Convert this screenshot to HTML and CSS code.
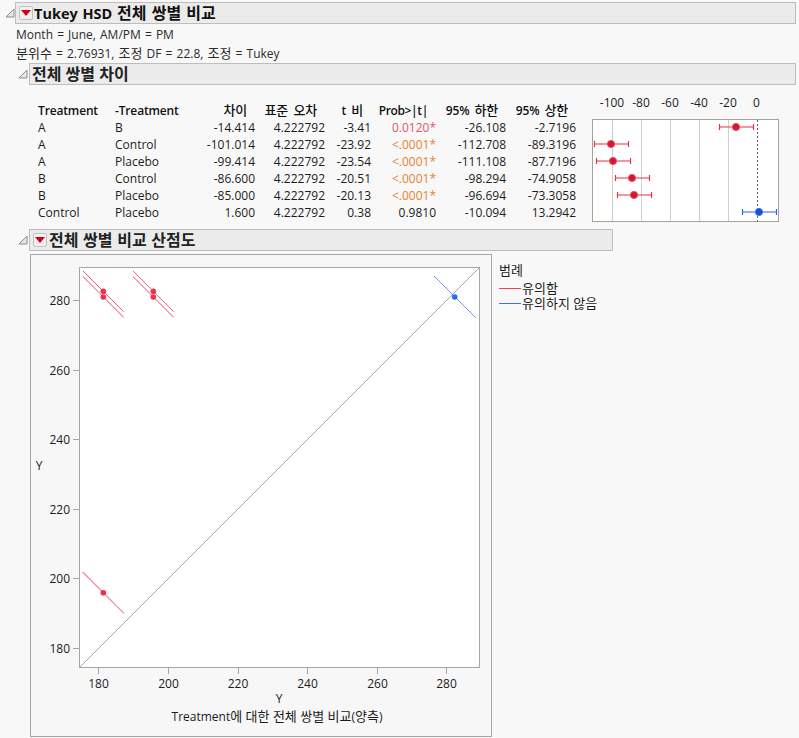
FILE: index.html
```html
<!DOCTYPE html>
<html lang="ko">
<head>
<meta charset="utf-8">
<title>Tukey HSD</title>
<link rel="stylesheet" href="styles.css">
</head>
<body>
<section class="outline top">
  <header class="bar bar-main">
    <svg class="tri" width="10" height="10" viewBox="0 0 10 10"><path d="M9 1V9H1Z" fill="#e6e6e6" stroke="#8c8c8c"/></svg>
    <div class="bar-box box-main">
      <span class="btn"><svg width="10" height="6" viewBox="0 0 10 6"><path d="M0 0H10L5 6Z" fill="#d0021b"/></svg></span>
      <h1>Tukey HSD <span class="ko">전체 쌍별 비교</span></h1>
    </div>
  </header>
  <div class="info">
    <p>Month = June, AM/PM = PM</p>
    <p><span class="ko">분위수</span> = 2.76931, <span class="ko">조정</span> DF = 22.8, <span class="ko">조정</span> = Tukey</p>
  </div>

  <header class="bar bar-sub">
    <svg class="tri" width="10" height="10" viewBox="0 0 10 10"><path d="M9 1V9H1Z" fill="#e6e6e6" stroke="#8c8c8c"/></svg>
    <div class="bar-box box-sub"><h2>전체 쌍별 차이</h2></div>
  </header>

  <div class="report">
    <table class="grid">
      <thead>
        <tr><th class="c1">Treatment</th><th class="c2">-Treatment</th><th class="n1 ko">차이</th><th class="n2 ko">표준 오차</th><th class="n3">t <span class="ko">비</span></th><th class="n4">Prob&gt;|t|</th><th class="n5">95% <span class="ko">하한</span></th><th class="n6">95% <span class="ko">상한</span></th></tr>
      </thead>
      <tbody>
        <tr><td>A</td><td>B</td><td class="num">-14.414</td><td class="num">4.222792</td><td class="num">-3.41</td><td class="num rose">0.0120*</td><td class="num">-26.108</td><td class="num">-2.7196</td></tr>
        <tr><td>A</td><td>Control</td><td class="num">-101.014</td><td class="num">4.222792</td><td class="num">-23.92</td><td class="num amber">&lt;.0001*</td><td class="num">-112.708</td><td class="num">-89.3196</td></tr>
        <tr><td>A</td><td>Placebo</td><td class="num">-99.414</td><td class="num">4.222792</td><td class="num">-23.54</td><td class="num amber">&lt;.0001*</td><td class="num">-111.108</td><td class="num">-87.7196</td></tr>
        <tr><td>B</td><td>Control</td><td class="num">-86.600</td><td class="num">4.222792</td><td class="num">-20.51</td><td class="num amber">&lt;.0001*</td><td class="num">-98.294</td><td class="num">-74.9058</td></tr>
        <tr><td>B</td><td>Placebo</td><td class="num">-85.000</td><td class="num">4.222792</td><td class="num">-20.13</td><td class="num amber">&lt;.0001*</td><td class="num">-96.694</td><td class="num">-73.3058</td></tr>
        <tr><td>Control</td><td>Placebo</td><td class="num">1.600</td><td class="num">4.222792</td><td class="num">0.38</td><td class="num">0.9810</td><td class="num">-10.094</td><td class="num">13.2942</td></tr>
      </tbody>
    </table>
    <svg class="forest" width="207" height="134" viewBox="592 90 207 134">
      <g class="flabel">
        <text x="612" y="107">-100</text><text x="641" y="107">-80</text><text x="670" y="107">-60</text><text x="699" y="107">-40</text><text x="728" y="107">-20</text><text x="756.5" y="107">0</text>
      </g>
      <rect x="592.5" y="119.5" width="186" height="102" fill="#fff" stroke="#a3a396"/>
      <g stroke="#cfcfcf"><path d="M612.5 120V221M641.5 120V221M670.5 120V221M699.5 120V221M728.5 120V221"/></g>
      <path d="M757.5 120V221" stroke="#666" stroke-dasharray="2 2"/>
      <g stroke="#e8304a" fill="none" stroke-width="1.2">
        <path d="M719.5 127H753.5M719.5 124V130M753.5 124V130"/>
        <path d="M594.5 144H628.5M594.5 141V147M628.5 141V147"/>
        <path d="M596.5 161H630.5M596.5 158V164M630.5 158V164"/>
        <path d="M615.5 178H649.5M615.5 175V181M649.5 175V181"/>
        <path d="M617.5 195H651.5M617.5 192V198M651.5 192V198"/>
      </g>
      <path d="M742.5 212H776.5M742.5 209V215M776.5 209V215" stroke="#2a66e8" fill="none" stroke-width="1.2"/>
      <g fill="#cf1a34" stroke="#ee4a5e">
        <circle cx="736" cy="127" r="3.6"/><circle cx="611" cy="144" r="3.6"/><circle cx="613" cy="161" r="3.6"/><circle cx="632" cy="178" r="3.6"/><circle cx="634" cy="195" r="3.6"/>
      </g>
      <circle cx="759" cy="212" r="3.6" fill="#1450d2" stroke="#3a78f0"/>
    </svg>
  </div>

  <header class="bar bar-third">
    <svg class="tri" width="10" height="10" viewBox="0 0 10 10"><path d="M9 1V9H1Z" fill="#e6e6e6" stroke="#8c8c8c"/></svg>
    <div class="bar-box box-third">
      <span class="btn"><svg width="10" height="6" viewBox="0 0 10 6"><path d="M0 0H10L5 6Z" fill="#d0021b"/></svg></span>
      <h2 class="plot-title">전체 쌍별 비교 산점도</h2>
    </div>
  </header>

  <div class="plot-row">
    <div class="frame">
      <svg class="scatter" width="460" height="481" viewBox="31 255 460 481">
        <rect x="79.5" y="267.5" width="400" height="400" fill="#fff" stroke="#a6a6a6"/>
        <g stroke="#a6a6a6" fill="none">
          <path d="M73 300.5H79M73 370.5H79M73 439.5H79M73 509.5H79M73 578.5H79M73 648.5H79"/>
          <path d="M98.5 668V674M168.5 668V674M238.5 668V674M307.5 668V674M377.5 668V674M446.5 668V674"/>
        </g>
        <path class="hair" d="M80 667L479 268" stroke="#a8a8a8"/>
        <g class="hair" stroke="#f4607a">
          <path d="M83 271L123.7 311.7"/>
          <path d="M133 271L173.7 311.7"/>
        </g>
        <g class="thin" stroke="#f58a9a">
          <path d="M83 276.7L123.7 317.3"/>
          <path d="M133 276.7L173.7 317.3"/>
          <path d="M82.7 572L124 613.3"/>
        </g>
        <path class="hair" d="M434 276L475.7 317.7" stroke="#6a98f4"/>
        <g fill="#ee3048">
          <circle cx="103.3" cy="291.3" r="2.8"/><circle cx="103.3" cy="297" r="2.8"/><circle cx="153.3" cy="291.3" r="2.8"/><circle cx="153.3" cy="297" r="2.8"/><circle cx="103.3" cy="592.7" r="2.8"/>
        </g>
        <circle cx="454.7" cy="297" r="2.8" fill="#2a6af0"/>
        <g class="ylabel">
          <text x="70" y="305">280</text><text x="70" y="375">260</text><text x="70" y="444">240</text><text x="70" y="514">220</text><text x="70" y="583">200</text><text x="70" y="653">180</text>
        </g>
        <g class="xlabel">
          <text x="98.5" y="688">180</text><text x="168.5" y="688">200</text><text x="238" y="688">220</text><text x="307.5" y="688">240</text><text x="377.5" y="688">260</text><text x="446.5" y="688">280</text>
        </g>
        <text class="axis" x="39" y="470">Y</text>
        <text class="axis" x="279" y="703">Y</text>
        <text class="axis" x="277" y="721">Treatment<tspan class="ko">에 대한 전체 쌍별 비교</tspan>(<tspan class="ko">양측</tspan>)</text>
      </svg>
    </div>
    <aside class="legend">
      <div class="legend-title ko">범례</div>
      <div class="legend-item ko"><span class="swatch red"></span>유의함</div>
      <div class="legend-item ko"><span class="swatch blue"></span>유의하지 않음</div>
    </aside>
  </div>
</section>
</body>
</html>
```

FILE: styles.css
```css
* { box-sizing: border-box; }
html, body { margin: 0; padding: 0; }
body {
  width: 799px;
  height: 738px;
  overflow: hidden;
  background: #f8f8f8;
  color: #1c1c1c;
  font: 12px/17px "Open Sans", "Noto Sans CJK KR", sans-serif;
}
.outline { padding-top: 2px; }
h1, h2, p { margin: 0; }
.ko { font-size: 13px; }
.bar { display: flex; align-items: center; }
.tri { flex: none; display: block; }
.bar-box {
  display: flex;
  align-items: center;
  height: 22px;
  background: #ebebeb;
  border: 1px solid #bdbdbd;
}
.bar-main { padding-left: 5px; }
.box-main { width: 781px; padding-left: 3px; gap: 1px; }
.bar-sub { margin-top: 2px; padding-left: 18px; }
.box-sub { width: 767px; margin-left: 1px; padding-left: 2px; }
.bar-third { padding-left: 18px; }
.box-third { width: 584px; margin-left: 1px; padding-left: 3px; gap: 2px; }
h1 {
  font-size: 14.5px;
  font-weight: 700;
  color: #111;
  white-space: nowrap;
  word-spacing: 1px;
}
h1 .ko { font-size: 16px; }
h2 {
  font-size: 16px;
  font-weight: 700;
  color: #222;
  white-space: nowrap;
}
.plot-title { word-spacing: 0.5px; }
.btn {
  display: flex;
  align-items: center;
  justify-content: center;
  width: 14px;
  height: 14px;
  background: #f1f1f1;
  border: 1px solid #c2c2c2;
  border-radius: 2px;
}
.info { padding: 2px 0 0 16px; line-height: 18px; height: 37px; color: #2a2a2a; word-spacing: 1px; }
.report { display: flex; padding-top: 17px; height: 144px; }
.grid {
  border-collapse: collapse;
  table-layout: fixed;
  width: 539px;
  margin-left: 38px;
  height: 119px;
}
.grid th, .grid td { padding: 0; height: 17px; line-height: 17px; font-weight: 400; white-space: nowrap; overflow: visible; }
.grid th { font-weight: 600; text-align: right; color: #111; padding-right: 9px; letter-spacing: -0.15px; word-spacing: 2px; }
.grid th.c1, .grid th.c2 { text-align: left; padding-right: 0; }
.grid th.n4 { letter-spacing: -0.35px; }
.grid th .ko, .grid th.ko { font-size: 13px; font-weight: 500; }
.c1 { width: 77px; }
.c2 { width: 77px; }
.n1 { width: 64px; }
.n2 { width: 70px; }
.n3 { width: 46px; }
.n4 { width: 65px; }
.n5 { width: 70px; }
.n6 { width: 70px; }
.grid td.num { text-align: right; padding-right: 1px; }
.rose { color: #e2566a; }
.amber { color: #e8812f; }
.forest { display: block; margin-left: 15px; margin-top: -12px; flex: none; }
.flabel text { font-size: 12px; text-anchor: middle; fill: #1c1c1c; }
.plot-row { display: flex; margin-top: 3px; padding-left: 30px; }
.frame {
  width: 462px;
  height: 483px;
  border: 1px solid #a6a6a6;
  background: #f7f7f7;
  flex: none;
}
.scatter { display: block; }
.thin { fill: none; stroke-width: 1.2; }
.hair { fill: none; stroke-width: 1; }
.ylabel text { font-size: 12px; text-anchor: end; fill: #1c1c1c; }
.xlabel text { font-size: 12px; text-anchor: middle; fill: #1c1c1c; }
.axis { font-size: 12px; text-anchor: middle; fill: #1c1c1c; }
.legend { padding: 6px 0 0 7px; }
.legend-title { height: 21px; line-height: 20px; }
.legend-item { display: flex; align-items: center; height: 15px; line-height: 15px; gap: 1px; white-space: nowrap; }
.swatch { width: 22px; height: 1px; flex: none; }
.swatch.red { background: #f0405a; }
.swatch.blue { background: #3a70e8; }
```
